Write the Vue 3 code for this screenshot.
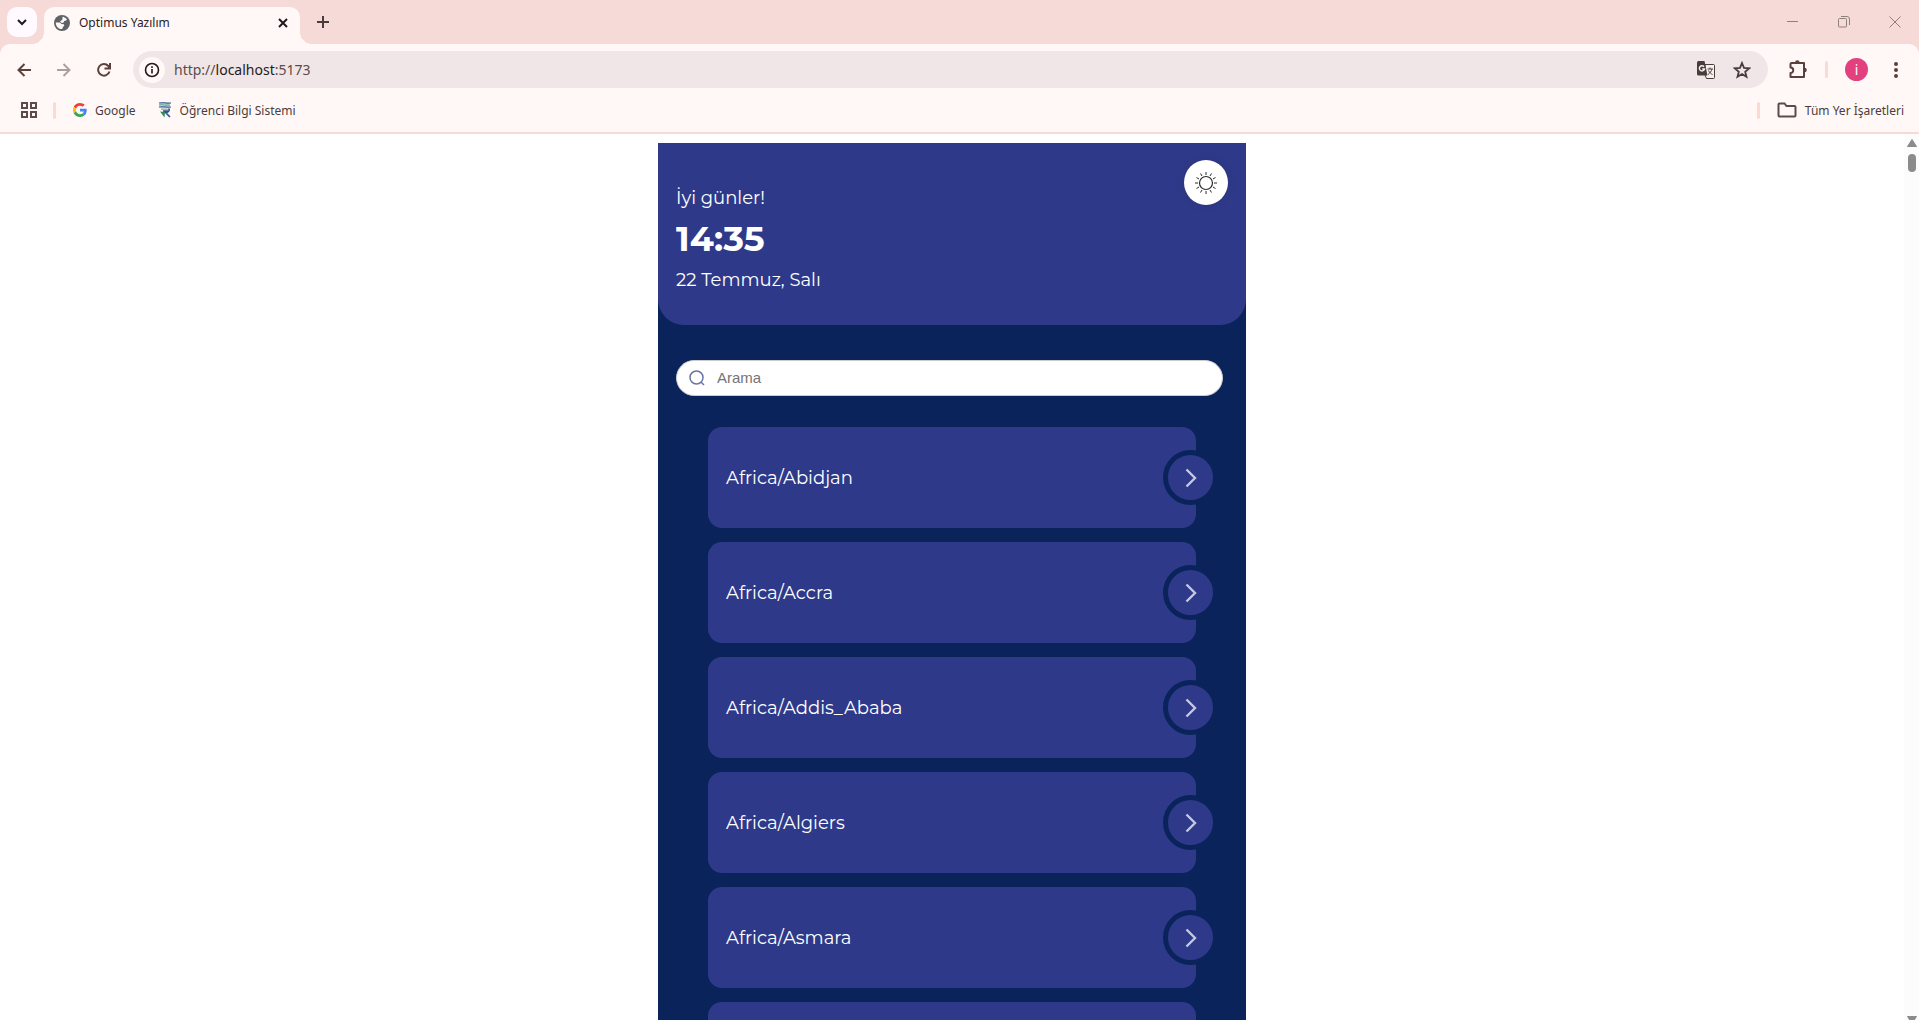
<script setup>
import { ref, computed } from 'vue'

const query = ref('')
const zones = [
  'Africa/Abidjan',
  'Africa/Accra',
  'Africa/Addis_Ababa',
  'Africa/Algiers',
  'Africa/Asmara',
]
const shown = computed(() =>
  zones.filter((z) => z.toLowerCase().includes(query.value.toLowerCase())),
)
</script>

<template>
  <div class="window">
    <header class="tabstrip">
      <button class="tab-search" aria-label="Sekmelerde ara">
        <svg width="12" height="12" viewBox="0 0 12 12"><path d="M2 4l4 4 4-4" fill="none" stroke="#1f1a1c" stroke-width="2" /></svg>
      </button>
      <div class="tab">
        <svg width="16" height="16" viewBox="0 0 16 16">
          <circle cx="8" cy="8" r="8" fill="#5f6368" />
          <path d="M8.600 1.800c1.600.2 3.400 1.200 4.400 2.800l-1.500 1.200-1.300.1-.6 1.500-1.700.6-1.700-.9.600-1.500 1.500-.4z" fill="#fff8f6" />
          <path d="M1.800 7.400l4 .2 1.800 1.500 2.200.2.500 1.300-1.500 1.600-.5 1.900c-3.700.2-6.500-2.700-6.500-6.700z" fill="#fff8f6" />
        </svg>
        <span class="tab-title">Optimus Yazılım</span>
        <button class="plain" aria-label="Sekmeyi kapat">
          <svg width="10" height="10" viewBox="0 0 10 10"><path d="M1 1l8 8M9 1L1 9" stroke="#1f1a1c" stroke-width="2" /></svg>
        </button>
      </div>
      <button class="plain new-tab" aria-label="Yeni sekme">
        <svg width="12" height="12" viewBox="0 0 12 12"><path d="M6 0v12M0 6h12" stroke="#4b3c3c" stroke-width="2" /></svg>
      </button>
      <div class="win-controls">
        <button class="plain" aria-label="Küçült">
          <svg width="12" height="12" viewBox="0 0 12 12"><path d="M0 5.500h11" stroke="#8f7f7d" /></svg>
        </button>
        <button class="plain" aria-label="Geri yükle">
          <svg width="12" height="12" viewBox="0 0 12 12" fill="none" stroke="#8f7f7d"><rect x=".5" y="2.500" width="8" height="8.500" rx="1" /><path d="M3 .5h6a2.500 2.500 0 0 1 2.500 2.500v6" /></svg>
        </button>
        <button class="plain" aria-label="Kapat">
          <svg width="12" height="12" viewBox="0 0 12 12"><path d="M.5 .5l11 11M11.500 .5l-11 11" stroke="#8f7f7d" /></svg>
        </button>
      </div>
    </header>

    <div class="chrome">
      <nav class="toolbar">
        <div class="nav-buttons">
          <button class="plain" aria-label="Geri">
            <svg width="14" height="14" viewBox="0 0 14 14" fill="none" stroke="#5b403d" stroke-width="2"><path d="M14 7H2M7.500 1l-6 6 6 6" /></svg>
          </button>
          <button class="plain" aria-label="İleri" disabled>
            <svg width="14" height="14" viewBox="0 0 14 14" fill="none" stroke="#aba09e" stroke-width="2"><path d="M0 7h12M6.500 1l6 6-6 6" /></svg>
          </button>
          <button class="plain" aria-label="Yenile">
            <svg width="14" height="14" viewBox="0 0 14 14" fill="none" stroke="#5b403d" stroke-width="2"><path d="M12.500 8.500A5.800 5.800 0 1 1 11.300 3L13 5M13 0v5.500H7.500" /></svg>
          </button>
        </div>
        <div class="omnibox">
          <button class="site-info" aria-label="Site bilgileri">
            <svg width="16" height="16" viewBox="0 0 16 16"><circle cx="8" cy="8" r="6.500" fill="none" stroke="#1f1a1c" stroke-width="1.600" /><path d="M8 7v4.500M8 4.300v1.600" stroke="#1f1a1c" stroke-width="1.600" /></svg>
          </button>
          <div class="address">
            <span>http://</span><a href="http://localhost:5173">localhost</a><span>:5173</span>
          </div>
          <button class="plain" aria-label="Bu sayfayı çevir">
            <svg width="18" height="18" viewBox="0 0 18 18">
              <path d="M8 3.500h8.500a1 1 0 0 1 1 1v12a1 1 0 0 1-1 1H9.500L8 14z" fill="#f8f0f0" stroke="#4b3c3c" />
              <path d="M1.500 0h6l3 14.500h-9A1.500 1.500 0 0 1 0 13V1.500A1.500 1.500 0 0 1 1.500 0z" fill="#4b3c3c" />
              <path d="M7 5.700A2.600 2.600 0 1 0 7.500 8H5.200" fill="none" stroke="#f8f0f0" stroke-width="1.400" />
              <path d="M10.500 8h5.500M13 6.500V8M15 8c-.7 2.500-2 4-4 5.500M11.500 9.500c1 2 2.500 3.300 4 4" fill="none" stroke="#4b3c3c" />
            </svg>
          </button>
          <button class="plain" aria-label="Bu sayfaya yer işareti koy">
            <svg width="18" height="18" viewBox="0 0 18 18"><path d="M9 2l2 4.900 5.200.4-4 3.400 1.300 5.100L9 13l-4.500 2.800 1.300-5.100-4-3.400 5.200-.4z" fill="none" stroke="#4b3c3c" stroke-width="1.800" /></svg>
          </button>
        </div>
        <button class="plain ext" aria-label="Uzantılar">
          <svg width="20" height="20" viewBox="0 0 20 20"><path d="M3.500 3h12.500v14H2.500v-4a2.400 2.400 0 0 0 0-5.500V4a1 1 0 0 1 1-1z" fill="none" stroke="#5b403d" stroke-width="2" stroke-linejoin="round" /><path d="M7 2.500a2.300 2.300 0 0 1 4.600 0zM16.500 7.700a2.300 2.300 0 0 1 0 4.600z" fill="#5b403d" /></svg>
        </button>
        <span class="divider"></span>
        <button class="avatar">i</button>
        <button class="plain" aria-label="Menü">
          <svg width="4" height="16" viewBox="0 0 4 16" fill="#5b403d"><circle cx="2" cy="2" r="2" /><circle cx="2" cy="8" r="2" /><circle cx="2" cy="14" r="2" /></svg>
        </button>
      </nav>

      <nav class="bookmarks">
        <button class="plain" aria-label="Uygulamalar">
          <svg width="16" height="16" viewBox="0 0 16 16" fill="none" stroke="#5b4b49" stroke-width="2"><path d="M1 1h5v5H1zM10 1h5v5h-5zM1 10h5v5H1zM10 10h5v5h-5z" /></svg>
        </button>
        <span class="divider"></span>
        <a class="bookmark" href="#google">
          <svg width="14" height="14" viewBox="0 0 48 48">
            <path fill="#EA4335" d="M24 9.500c3.540 0 6.710 1.220 9.210 3.600l6.850-6.850C35.900 2.380 30.470 0 24 0 14.620 0 6.510 5.380 2.560 13.220l7.980 6.190C12.430 13.720 17.740 9.500 24 9.500z" />
            <path fill="#4285F4" d="M46.980 24.550c0-1.570-.15-3.090-.38-4.550H24v9.020h12.940c-.58 2.960-2.260 5.480-4.780 7.180l7.730 6c4.510-4.180 7.090-10.360 7.090-17.650z" />
            <path fill="#FBBC05" d="M10.530 28.590c-.48-1.450-.76-2.990-.76-4.590s.27-3.140.76-4.590l-7.980-6.190C.92 16.460 0 20.120 0 24c0 3.880.92 7.540 2.560 10.780l7.970-6.190z" />
            <path fill="#34A853" d="M24 48c6.480 0 11.930-2.130 15.890-5.810l-7.730-6c-2.150 1.450-4.920 2.300-8.160 2.300-6.260 0-11.570-4.220-13.470-9.910l-7.980 6.190C6.510 42.620 14.620 48 24 48z" />
          </svg>
          <span>Google</span>
        </a>
        <a class="bookmark" href="#obs">
          <svg width="14" height="16" viewBox="0 0 14 16" fill="none">
            <path d="M1 1c4-.8 7 .6 12 0" stroke="#35508f" stroke-width="1.200" />
            <path d="M1 3c4-.8 7 .6 11 0" stroke="#6fb59b" stroke-width="1.600" />
            <path d="M1 5c4-.8 7 .6 12 0" stroke="#35508f" stroke-width="1.200" />
            <path d="M3 7.200c3-.4 5 .3 8 0" stroke="#6fb59b" stroke-width="1.200" />
            <path d="M5 9h5.500M11 6.500c1 2.500-1 4-3.500 4l4.500 4.500" stroke="#35508f" stroke-width="1.600" />
            <path d="M2 9.500l5 .5-.5 5.500z" fill="#2f8a5c" />
          </svg>
          <span>Öğrenci Bilgi Sistemi</span>
        </a>
        <span class="divider push"></span>
        <button class="bookmark all">
          <svg width="20" height="16" viewBox="0 0 20 16"><path d="M2.500 1.500h5l2 2.500h8a1 1 0 0 1 1 1v8.500a1 1 0 0 1-1 1h-15a1 1 0 0 1-1-1v-11a1 1 0 0 1 1-1z" fill="none" stroke="#5b4b49" stroke-width="2" /></svg>
          <span>Tüm Yer İşaretleri</span>
        </button>
      </nav>
    </div>

    <div class="viewport">
      <main class="page">
        <div class="app">
          <div class="hero-back">
            <section class="hero">
              <div class="greeting">
                <p>İyi günler!</p>
                <h1>14:35</h1>
                <p>22 Temmuz, Salı</p>
              </div>
              <button class="theme" aria-label="Temayı değiştir">
                <svg width="24" height="24" viewBox="0 0 24 24" fill="none" stroke="#2a2a2a">
                  <circle cx="12" cy="12" r="6.500" stroke-width="1.200" />
                  <path d="M12 1v3M12 20v3M1 12h3M20 12h3M6.500 2.500L8 5M16 19l1.500 2.500M2.500 6.500L5 8M19 16l2.500 1.500M17.500 2.500L16 5M8 19l-1.500 2.500M21.500 6.500L19 8M5 16l-2.500 1.500" />
                </svg>
              </button>
            </section>
          </div>

          <label class="search">
            <svg width="16" height="16" viewBox="0 0 16 16" fill="none" stroke="#6876a4" stroke-width="1.500"><circle cx="7.500" cy="7.500" r="6.500" /><path d="M12 12l3 3" /></svg>
            <input v-model="query" type="text" placeholder="Arama" aria-label="Arama" />
          </label>

          <ul class="zones">
            <li v-for="zone in shown" :key="zone" class="zone">
              <span>{{ zone }}</span>
              <button class="go" :aria-label="zone">
                <svg width="12" height="20" viewBox="0 0 12 20"><path d="M1.500 1.500L10 10l-8.500 8.500" fill="none" stroke="#c4c8e0" stroke-width="2.400" /></svg>
              </button>
            </li>
            <li class="zone"></li>
          </ul>
        </div>
      </main>
      <div class="scrollbar" aria-hidden="true">
        <svg width="10" height="8" viewBox="0 0 10 8"><path d="M5 .5L9.500 7.500h-9z" fill="#8b8b8b" stroke="#8b8b8b" stroke-linejoin="round" /></svg>
        <span class="thumb"></span>
        <svg class="down" width="10" height="4" viewBox="0 0 10 4"><path d="M.5 .5h9L5 7.500z" fill="#8b8b8b" stroke="#8b8b8b" stroke-linejoin="round" /></svg>
      </div>
    </div>
  </div>
</template>

<style>
body {
  margin: 0;
  background: #fff;
}
</style>

<style scoped>
* {
  box-sizing: border-box;
}
.window {
  display: flex;
  flex-direction: column;
  height: 100vh;
  overflow: hidden;
  background: #f5dad7;
  color: #4b3c3c;
  font: 12px/16px "Noto Sans", sans-serif;
}
button {
  border: 0;
  padding: 0;
  font: inherit;
  color: inherit;
}
a {
  color: inherit;
  text-decoration: none;
}
svg {
  display: block;
  flex: none;
}
.plain {
  display: flex;
  background: none;
}

.tabstrip {
  display: flex;
  align-items: center;
  height: 44px;
  padding-left: 7px;
}
.tab-search {
  display: flex;
  align-items: center;
  justify-content: center;
  width: 30px;
  height: 30px;
  border-radius: 10px;
  background: #fffaff;
}
.tab {
  position: relative;
  display: flex;
  align-items: center;
  align-self: flex-end;
  width: 256px;
  height: 37px;
  margin-left: 7px;
  padding: 0 12px 6px 10px;
  border-radius: 10px 10px 0 0;
  background: #fff8f6;
}
.tab::before,
.tab::after {
  content: "";
  position: absolute;
  bottom: 0;
  width: 12px;
  height: 12px;
}
.tab::before {
  right: 100%;
  background: radial-gradient(circle at 0 0, transparent 12px, #fff8f6 12px);
}
.tab::after {
  left: 100%;
  background: radial-gradient(circle at 100% 0, transparent 12px, #fff8f6 12px);
}
.tab-title {
  flex: 1;
  margin-left: 9px;
  padding-top: 1px;
  color: #2b2324;
}
.new-tab {
  margin-left: 17px;
}
.win-controls {
  display: flex;
  gap: 39px;
  margin-left: auto;
  padding-right: 18px;
}

.chrome {
  border-bottom: 2px solid #f5dad7;
  border-radius: 10px 10px 0 0;
  background: #fff8f6;
}
.toolbar {
  display: flex;
  align-items: center;
  padding: 7px 21px 0 17px;
}
.nav-buttons {
  display: flex;
  gap: 26px;
  margin-right: 22px;
}
.omnibox {
  display: flex;
  flex: 1;
  align-items: center;
  gap: 18px;
  height: 37px;
  padding: 0 17px 0 6px;
  border-radius: 20px;
  background: #f1e6e7;
}
.site-info {
  display: flex;
  align-items: center;
  justify-content: center;
  width: 26px;
  height: 26px;
  border-radius: 50%;
  background: #fff8f6;
}
.address {
  flex: 1;
  margin-left: -9px;
  font-size: 14px;
  line-height: 20px;
  color: #5c4b4b;
}
.address a {
  color: #1f1a1c;
}
.ext {
  margin: 0 17px 0 20px;
}
.divider {
  width: 3px;
  height: 17px;
  border-radius: 2px;
  background: #fdd9d4;
}
.avatar {
  width: 23px;
  height: 23px;
  margin: 0 26px 0 17px;
  border-radius: 50%;
  background: #e2407f;
  color: #fff;
  font-size: 14px;
}
.bookmarks {
  display: flex;
  align-items: center;
  height: 44px;
  padding: 0 15px 0 21px;
}
.bookmarks .divider {
  margin: 0 17px 0 16px;
}
.bookmarks .push {
  margin-left: auto;
}
.bookmark {
  display: flex;
  align-items: center;
  gap: 8px;
  margin-right: 22px;
  background: none;
}
.bookmark span {
  padding-top: 1px;
}
.bookmark.all {
  margin-right: 0;
}

.viewport {
  display: flex;
  flex: 1;
  min-height: 0;
  background: #fff;
}
.page {
  flex: 1;
  overflow: hidden;
  padding: 9px 8px 0;
}
.app {
  max-width: 588px;
  margin: 0 auto;
  background: #0a235a;
  color: #fff;
  font-family: Montserrat, "Open Sans", sans-serif;
  font-size: 18px;
  line-height: 22px;
}
.hero {
  display: flex;
  align-items: flex-start;
  justify-content: space-between;
  padding: 17px 18px 34px;
  border-radius: 0 0 26px 26px;
  background: #2e3a89;
}
.greeting {
  padding-top: 27px;
}
.greeting p {
  margin: 0;
}
.greeting h1 {
  margin: 10px 0;
  font-size: 35px;
  line-height: 40px;
}
.theme {
  display: flex;
  align-items: center;
  justify-content: center;
  width: 44px;
  height: 45px;
  border-radius: 50%;
  background: #fff;
  box-shadow: 0 0 8px rgba(0, 0, 0, 0.1);
}
.search {
  display: flex;
  align-items: center;
  gap: 12px;
  height: 36px;
  margin: 35px 23px 31px 18px;
  padding: 0 12px;
  border: 1px solid #ccc;
  border-radius: 18px;
  background: #fff;
}
.search input {
  flex: 1;
  min-width: 0;
  border: 0;
  padding: 0;
  outline: 0;
  background: none;
  font: 15px/20px "Liberation Sans", Arial, sans-serif;
}
.search input::placeholder {
  color: #757575;
}
.zones {
  display: flex;
  flex-direction: column;
  gap: 14px;
  margin: 0;
  padding: 0 50px 14px;
  list-style: none;
}
.zone {
  display: flex;
  align-items: center;
  justify-content: space-between;
  height: 101px;
  padding-left: 18px;
  border-radius: 14px;
  background: #2e3a89;
}
.go {
  display: flex;
  align-items: center;
  justify-content: center;
  width: 55px;
  height: 55px;
  margin-right: -22px;
  border: 5px solid #0a235a;
  border-radius: 50%;
  background: #2e3a89;
}
.scrollbar {
  display: flex;
  flex-direction: column;
  align-items: center;
  width: 15px;
  padding-top: 5px;
  background: #fcfcfc;
}
.thumb {
  width: 8px;
  height: 18px;
  margin-top: 7px;
  border-radius: 4px;
  background: #8b8b8b;
}
.down {
  margin-top: auto;
}
</style>
